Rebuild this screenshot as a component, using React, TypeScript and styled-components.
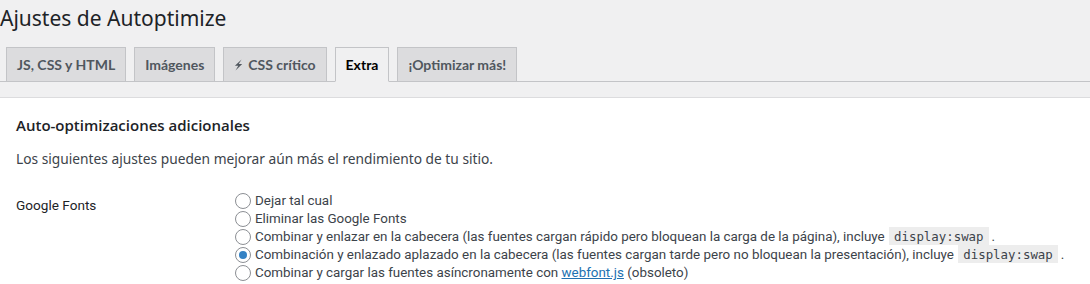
import React from 'react';
import styled, { createGlobalStyle } from 'styled-components';

const GlobalStyle = createGlobalStyle`
  html, body {
    margin: 0;
    padding: 0;
    background: #f0f0f1;
  }

  body {
    color: #3c434a;
    font-family: "Noto Sans", "Open Sans", sans-serif;
    font-size: 14px;
    line-height: 1.4;
  }
`;

type TabType = {
  id: string;
  label: string;
  icon?: boolean;
};

const tabs: TabType[] = [
  { id: 'main', label: 'JS, CSS y HTML' },
  { id: 'img', label: 'Imágenes' },
  { id: 'ccss', label: 'CSS crítico', icon: true },
  { id: 'extra', label: 'Extra' },
  { id: 'more', label: '¡Optimizar más!' },
];

type FontOption = {
  value: string;
  label: React.ReactNode;
};

// built lazily, the styled parts below are not defined yet at module load
const getFontOptions = (): FontOption[] => [
  { value: '1', label: 'Dejar tal cual' },
  { value: '2', label: 'Eliminar las Google Fonts' },
  {
    value: '3',
    label: (
      <>
        Combinar y enlazar en la cabecera (las fuentes cargan rápido pero bloquean la carga de la
        página), incluye <Code>display:swap</Code>.
      </>
    ),
  },
  {
    value: '4',
    label: (
      <>
        Combinación y enlazado aplazado en la cabecera (las fuentes cargan tarde pero no bloquean la
        presentación), incluye <Code>display:swap</Code>.
      </>
    ),
  },
  {
    value: '5',
    label: (
      <>
        Combinar y cargar las fuentes asíncronamente con <Link href="#">webfont.js</Link> (obsoleto)
      </>
    ),
  },
];

const Bolt = () => (
  <svg width="9" height="12" viewBox="0 0 9 12" aria-hidden="true">
    <path d="M7.6 0.4 L0.9 6.8 H4.3 L1.5 11.6 L8.2 5 H4.7 Z" fill="#50575e" />
  </svg>
);

const App = () => {
  const active = 'extra';
  const selected = '4';
  const fontOptions = getFontOptions();

  return (
    <>
      <GlobalStyle />
      <Wrap>
        <Title>Ajustes de Autoptimize</Title>
        <TabBar>
          {tabs.map((tab) => (
            <Tab key={tab.id} $active={tab.id === active}>
              {tab.icon && <Bolt />}
              {tab.label}
            </Tab>
          ))}
        </TabBar>
        <Panel>
          <SectionTitle>Auto-optimizaciones adicionales</SectionTitle>
          <Intro>Los siguientes ajustes pueden mejorar aún más el rendimiento de tu sitio.</Intro>
          <FieldRow>
            <FieldLabel>Google Fonts</FieldLabel>
            <RadioList>
              {fontOptions.map((opt) => (
                <RadioLabel key={opt.value}>
                  <Radio type="radio" name="gfonts" value={opt.value} defaultChecked={opt.value === selected} />
                  <span>{opt.label}</span>
                </RadioLabel>
              ))}
            </RadioList>
          </FieldRow>
        </Panel>
      </Wrap>
    </>
  );
};

const Wrap = styled.div`
  width: 1090px;
  height: 284px;
  overflow: hidden;
`;

const Title = styled.h1`
  margin: 0;
  padding: 4px 0 0;
  font-size: 21px;
  font-weight: 400;
  line-height: 28px;
  color: #1d2327;
`;

const TabBar = styled.nav`
  display: flex;
  align-items: flex-end;
  gap: 8px;
  margin-top: 14px;
  padding-left: 6px;
  border-bottom: 1px solid #c3c4c7;
  height: 35px;
`;

const Tab = styled.a<{ $active: boolean }>`
  display: flex;
  align-items: center;
  gap: 5px;
  height: 35px;
  box-sizing: border-box;
  padding: 0 10px;
  margin-bottom: -1px;
  border: 1px solid #c3c4c7;
  border-bottom: 1px solid ${({ $active }) => ($active ? '#f0f0f1' : '#c3c4c7')};
  background: ${({ $active }) => ($active ? '#f0f0f1' : '#dcdcde')};
  color: ${({ $active }) => ($active ? '#000' : '#50575e')};
  font-family: Lato, "Noto Sans", sans-serif;
  font-size: 14px;
  font-weight: 700;
  text-decoration: none;
  white-space: nowrap;
`;

const Panel = styled.div`
  margin-top: 15px;
  background: #fff;
  border-top: 1px solid #dcdcde;
  padding: 15px 16px 0;
  height: 300px;
`;

const SectionTitle = styled.h2`
  margin: 0;
  font-family: "Open Sans", "Noto Sans", sans-serif;
  font-size: 15px;
  font-weight: 600;
  line-height: 24px;
  color: #1d2327;
`;

const Intro = styled.p`
  margin: 11px 0 0;
  font-size: 13.75px;
  line-height: 22px;
  color: #3c434a;
`;

const FieldRow = styled.div`
  display: grid;
  grid-template-columns: 219px 1fr;
  margin-top: 22px;
`;

const FieldLabel = styled.div`
  font-family: Roboto, "Noto Sans", sans-serif;
  font-size: 13.6px;
  line-height: 18px;
  color: #1d2327;
  padding-top: 4px;
`;

const RadioList = styled.div`
  display: flex;
  flex-direction: column;
  font-family: Roboto, "Noto Sans", sans-serif;
`;

const RadioLabel = styled.label`
  display: flex;
  align-items: center;
  gap: 4px;
  font-size: 13.4px;
  line-height: 18px;
  color: #3c434a;
  white-space: nowrap;
`;

const Radio = styled.input`
  appearance: none;
  flex: none;
  width: 16px;
  height: 16px;
  margin: 0;
  border: 1px solid #8c8f94;
  border-radius: 50%;
  background: #fff;
  box-sizing: border-box;
  display: grid;
  place-items: center;

  &:checked::before {
    content: '';
    width: 8px;
    height: 8px;
    border-radius: 50%;
    background: #3582c4;
  }
`;

const Code = styled.code`
  font-family: "DejaVu Sans Mono", monospace;
  font-size: 12.4px;
  background: rgba(0, 0, 0, 0.07);
  padding: 2px 5px 1px;
  margin: 0 3px 0 1px;
  color: #3c434a;
`;

const Link = styled.a`
  color: #2271b1;
  text-decoration: underline;
`;

export default App;
